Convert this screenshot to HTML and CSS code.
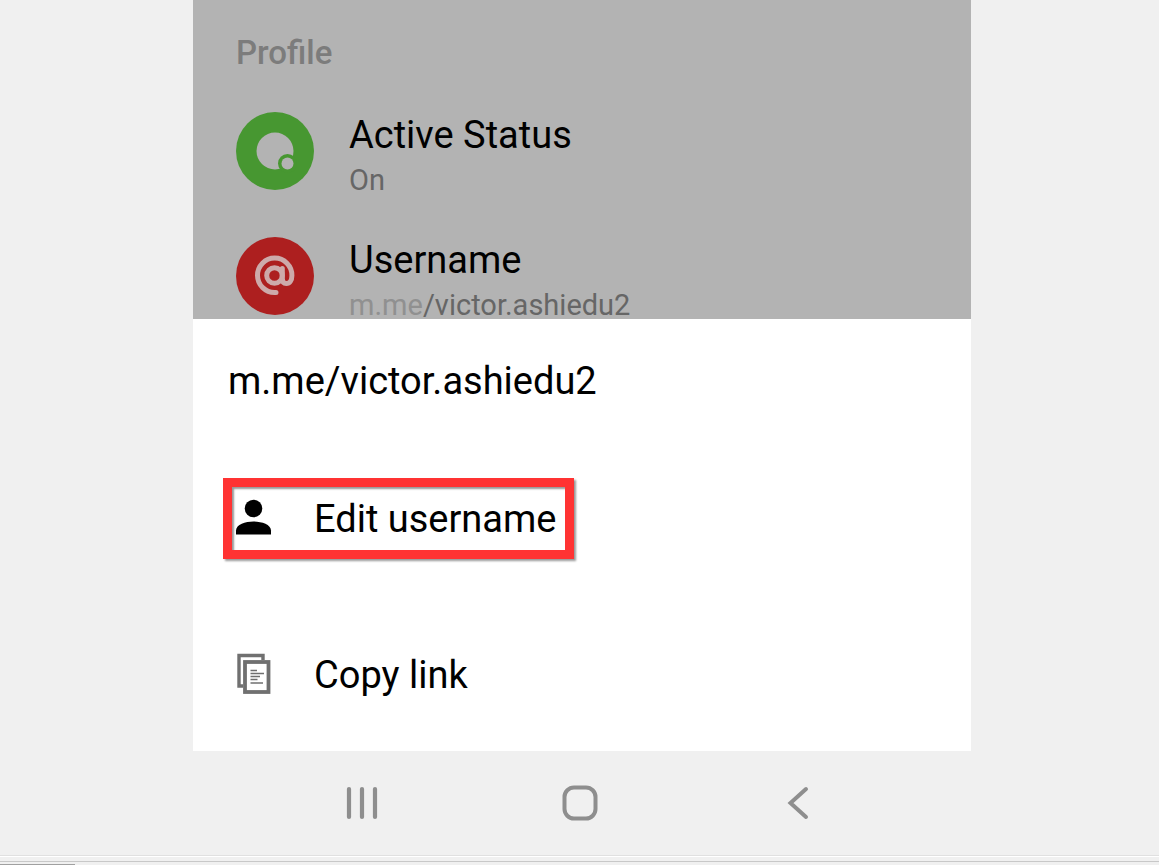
FILE: index.html
```html
<!DOCTYPE html>
<html lang="en">
<head>
  <meta charset="UTF-8" />
  <meta name="viewport" content="width=device-width, initial-scale=1.0"/>
  <title>Edit username</title>
  <link rel="stylesheet" href="styles.css">
</head>
<body>
  <div class="phone">
    <main class="settings">
      <h2 class="section-title">Profile</h2>
      <div class="setting">
        <svg class="setting-icon" viewBox="0 0 78 78" aria-hidden="true">
          <circle cx="39" cy="39" r="39" fill="#479731"/>
          <circle cx="39" cy="39" r="18.5" fill="#b3b3b3"/>
          <circle cx="51.500" cy="51.500" r="9.500" fill="#479731"/>
          <circle cx="51.500" cy="51.500" r="6" fill="#b3b3b3"/>
        </svg>
        <div class="setting-text">
          <div class="setting-name">Active Status</div>
          <div class="setting-value">On</div>
        </div>
      </div>
      <div class="setting">
        <svg class="setting-icon" viewBox="0 0 78 78" aria-hidden="true">
          <circle cx="39" cy="39" r="39" fill="#ad1f1f"/>
          <g fill="none" stroke="#cdaaaa" stroke-width="5" stroke-linecap="round">
            <circle cx="38.500" cy="38.500" r="7.800"/>
            <path d="M46.300 31.500V41.500C46.300 45 48 46.500 50.300 46.500C53.700 46.500 55.900 43.500 55.900 38.500A17.200 17.200 0 1 0 39 55.500H40"/>
          </g>
        </svg>
        <div class="setting-text">
          <div class="setting-name">Username</div>
          <div class="setting-value"><span class="domain">m.me</span>/victor.ashiedu2</div>
        </div>
      </div>
    </main>

    <section class="sheet">
      <h1 class="sheet-title">m.me/victor.ashiedu2</h1>
      <button class="action highlighted" type="button">
        <svg class="action-icon" viewBox="0 0 38 40" aria-hidden="true">
          <circle cx="18.500" cy="9.500" r="8.800"/>
          <path d="M1 35.500V31.500C1 25.500 10.500 22.500 18.500 22.500S36 25.500 36 31.500V35.500Z"/>
        </svg>
        Edit username
      </button>
      <button class="action" type="button">
        <svg class="action-icon" viewBox="0 0 38 40" aria-hidden="true">
          <g fill="none" stroke="#707070">
            <path d="M28 5V.5H4V31H8" stroke-width="3.400"/>
            <rect x="10" y="7" width="23.500" height="30" stroke-width="3.800"/>
            <path d="M15.500 15.500H22M15.500 18.500H29M15.500 21.500H25M15.500 24.500H22.500M15.500 28H28" stroke-width="1.300"/>
          </g>
        </svg>
        Copy link
      </button>
    </section>

    <nav class="nav-bar">
      <button class="nav-button" type="button" aria-label="Recent apps">
        <svg width="36" height="36" viewBox="0 0 36 36" fill="none" stroke="#8e8e8e" stroke-width="4.200" stroke-linecap="round">
          <path d="M5 4V32M18 4V32M31 4V32"/>
        </svg>
      </button>
      <button class="nav-button" type="button" aria-label="Home">
        <svg width="36" height="36" viewBox="0 0 36 36" fill="none" stroke="#8e8e8e" stroke-width="4">
          <rect x="2.500" y="2.500" width="31" height="31" rx="9.500"/>
        </svg>
      </button>
      <button class="nav-button" type="button" aria-label="Back">
        <svg width="36" height="36" viewBox="0 0 36 36" fill="none" stroke="#8e8e8e" stroke-width="4" stroke-linecap="round">
          <path d="M26 4L10.500 18L26 32"/>
        </svg>
      </button>
    </nav>
  </div>

  <footer class="window-edge">
    <div class="edge-line"></div>
    <div class="edge-tab"></div>
  </footer>
</body>
</html>
```

FILE: styles.css
```css
* {
  box-sizing: border-box;
}
body {
  margin: 0;
  min-height: 100vh;
  display: flex;
  flex-direction: column;
  background: #f0f0f0;
  color: #000;
  font-family: Roboto, sans-serif;
}
button {
  font-family: inherit;
  cursor: pointer;
}
h1, h2 {
  margin: 0;
}
.phone {
  flex: 1;
  display: flex;
  flex-direction: column;
  padding: 0 188px 0 193px;
}

/* dimmed settings page behind the sheet */
.settings {
  display: flex;
  flex-direction: column;
  gap: 35px;
  padding: 33px 43px 0;
  margin-bottom: -8px;
  background: #b3b3b3;
}
.section-title {
  margin-bottom: 4px;
  font-size: 33px;
  line-height: 40px;
  font-weight: 500;
  color: #7c7c7c;
}
.setting {
  display: flex;
  gap: 35px;
}
.setting-icon {
  width: 78px;
  height: 78px;
}
.setting-name {
  font-size: 38px;
  line-height: 46px;
}
.setting-value {
  font-size: 29px;
  line-height: 44px;
  color: #666;
}
.domain {
  color: #909090;
}

/* bottom sheet */
.sheet {
  display: flex;
  flex-direction: column;
  align-items: flex-start;
  padding: 39px 30px 36px;
  background: #fff;
}
.sheet-title {
  margin: 0 5px 74px;
  font-size: 38px;
  line-height: 46px;
  font-weight: 400;
}
.action {
  display: flex;
  align-items: center;
  gap: 41px;
  padding: 9px 8px 8px 3px;
  border: 9px solid transparent;
  background: none;
  color: #000;
  font-size: 38px;
  line-height: 46px;
}
.action + .action {
  margin-top: 75px;
}
.action-icon {
  width: 38px;
  height: 40px;
  overflow: visible;
}
.highlighted {
  border-color: #f33;
  box-shadow: 2px 2px 2px #999, inset 2px 2px 2px #999;
}

/* system navigation */
.nav-bar {
  flex: 1;
  display: grid;
  grid-template-columns: repeat(3, 1fr);
  align-items: center;
  padding: 0 64px 0 60px;
}
.nav-button {
  display: flex;
  justify-content: center;
  padding: 12px;
  border: none;
  background: none;
}

/* window border at the bottom */
.window-edge {
  border-top: 1px solid #e0e0e0;
}
.edge-line {
  height: 6px;
  border-top: 1px solid #fff;
  border-bottom: 1px solid #c8c8c8;
}
.edge-tab {
  width: 75px;
  height: 3px;
  border-bottom: 1px solid #a0a0a0;
}
```
